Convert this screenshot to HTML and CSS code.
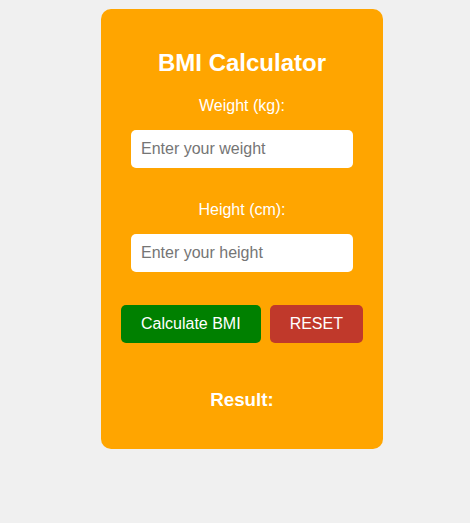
FILE: index.html
```html
<!DOCTYPE html>
<html>
<head>
<meta charset="utf-8">
<link rel="stylesheet" href="styles.css">
</head>
<body>
<div class="page">
  <div class="card">
    <h2 class="title">BMI Calculator</h2>
    <label class="label" for="w">Weight (kg):</label>
    <input class="field" id="w" type="text" placeholder="Enter your weight">
    <label class="label" for="h">Height (cm):</label>
    <input class="field" id="h" type="text" placeholder="Enter your height">
    <div class="actions">
      <button class="btn btn-calc">Calculate BMI</button>
      <button class="btn btn-reset">RESET</button>
    </div>
    <h3 class="result">Result:</h3>
  </div>
</div>
</body>
</html>
```
FILE: styles.css
```css
html, body {
  margin: 0;
  padding: 0;
  background: #f0f0f0;
  font-family: "Liberation Sans", Arial, sans-serif;
}
.page {
  padding-top: 9px;
  padding-left: 101px;
}
.card {
  box-sizing: border-box;
  width: 282px;
  padding: 20px;
  background: #ffa500;
  border-radius: 10px;
  color: #fff;
  display: flex;
  flex-direction: column;
  align-items: center;
}
.title {
  font-size: 24px;
  font-weight: bold;
  margin: 20px 0;
  line-height: 27.6px;
}
.label {
  font-size: 16px;
  line-height: 18.4px;
  margin-bottom: 15px;
}
.field {
  box-sizing: border-box;
  width: 222px;
  height: 38px;
  padding: 0 10px;
  border: none;
  border-radius: 5px;
  background: #fff;
  font-family: "Liberation Sans", Arial, sans-serif;
  font-size: 16px;
  color: #333;
  margin-bottom: 33px;
  outline: none;
}
.field::placeholder {
  color: #757575;
}
.actions {
  display: flex;
  gap: 9px;
  margin-bottom: 27px;
}
.btn {
  height: 38px;
  padding: 0 20px;
  border: none;
  border-radius: 5px;
  color: #fff;
  font-family: "Liberation Sans", Arial, sans-serif;
  font-size: 16px;
}
.btn-calc {
  background: #008000;
}
.btn-reset {
  background: #c0392b;
}
.result {
  font-size: 18.72px;
  font-weight: bold;
  line-height: 21.5px;
  margin: 18.72px 0;
}
```
